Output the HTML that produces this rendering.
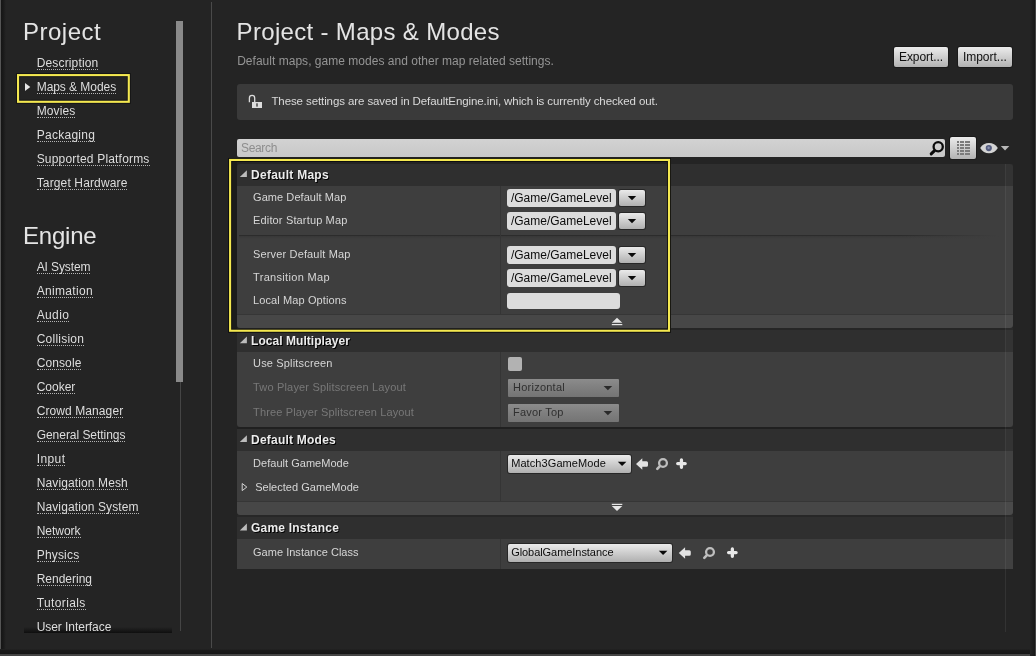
<!DOCTYPE html>
<html><head><meta charset="utf-8">
<style>
*{box-sizing:border-box;margin:0;padding:0}
html,body{width:1036px;height:656px;overflow:hidden;background:#242424}
body{position:relative;font-family:"Liberation Sans",sans-serif;color:#dcdcdc}
.a{position:absolute;white-space:nowrap}
.nav{color:#dedede;border-bottom:1px dotted #b4b4b4;height:15px}
.nav.nou{border-bottom:none}
.lbl{color:#d6d6d6}
.cat{font-weight:bold;color:#ececec;text-shadow:1px 1px 0 #000}
.hdr{background:#2f2f2f}
.rows{background:#3e3e3e}
.adv{background:#474747}
.btn{background:linear-gradient(#ececec,#d2d2d2 45%,#b2b2b2);border-radius:2px;box-shadow:0 0 0 1px #1a1a1a}
.tb{background:#dcdcdc;border-radius:3px}
.cmb{background:linear-gradient(#eaeaea,#d0d0d0 45%,#b0b0b0);border-radius:2px;box-shadow:0 0 0 1px #272727}
.cmbd{background:linear-gradient(#8c8c8c,#808080 45%,#747474);border-radius:1px}
svg{position:absolute;left:0;top:0;overflow:visible}
</style></head><body>
<!-- sidebar chrome -->
<div class="a" style="left:211px;top:2px;width:1px;height:646px;background:#4a4a4a"></div>
<div class="a" style="left:180px;top:382px;width:1px;height:249px;background:#454545"></div>
<div class="a" style="left:176px;top:21px;width:7px;height:361px;background:#8a8a8a"></div>
<!-- nav highlight -->
<!-- info box -->
<div class="a" style="left:237px;top:84px;width:776px;height:36px;background:#3a3a3a;border-radius:3px"></div>
<!-- buttons -->
<div class="a btn" style="left:894px;top:47px;width:54px;height:20px"></div>
<div class="a btn" style="left:958px;top:47px;width:54px;height:20px"></div>
<!-- search -->
<div class="a" style="left:237px;top:139px;width:708px;height:18px;background:linear-gradient(#d2d2d2,#c8c8c8);border-radius:2px"></div>
<div class="a btn" style="left:950px;top:137px;width:26px;height:22px"></div>
<!-- panel: Default Maps -->
<div class="a hdr" style="left:237px;top:164px;width:776px;height:22px;border-radius:3px 3px 0 0"></div>
<div class="a rows" style="left:237px;top:186px;width:776px;height:128px"></div>
<div class="a" style="left:239px;top:235px;width:760px;height:4px;background:linear-gradient(#2c2c2c 0,#2c2c2c 25%,#383838 26%,#3e3e3e)"></div>
<div class="a" style="left:899px;top:235px;width:100px;height:4px;background:linear-gradient(90deg,rgba(62,62,62,0),#3e3e3e)"></div>
<div class="a" style="left:237px;top:314px;width:776px;height:1px;background:#363636"></div>
<div class="a adv" style="left:237px;top:315px;width:776px;height:13px;border-radius:0 0 3px 3px"></div>
<div class="a" style="left:237px;top:328px;width:776px;height:2px;background:#262626"></div>
<!-- Local Multiplayer -->
<div class="a hdr" style="left:237px;top:330px;width:776px;height:22px"></div>
<div class="a rows" style="left:237px;top:352px;width:776px;height:75px;border-radius:0 0 3px 3px"></div>
<div class="a" style="left:237px;top:427px;width:776px;height:2px;background:#202020"></div>
<!-- Default Modes -->
<div class="a hdr" style="left:237px;top:429px;width:776px;height:22px"></div>
<div class="a rows" style="left:237px;top:451px;width:776px;height:50px"></div>
<div class="a" style="left:237px;top:501px;width:776px;height:1px;background:#363636"></div>
<div class="a adv" style="left:237px;top:502px;width:776px;height:13px;border-radius:0 0 3px 3px"></div>
<div class="a" style="left:237px;top:515px;width:776px;height:2px;background:#272727"></div>
<!-- Game Instance -->
<div class="a hdr" style="left:237px;top:517px;width:776px;height:22px"></div>
<div class="a rows" style="left:237px;top:539px;width:776px;height:30px"></div>
<!-- column divider -->
<div class="a" style="left:500px;top:186px;width:1px;height:128px;background:#353535"></div>
<div class="a" style="left:500px;top:352px;width:1px;height:75px;background:#353535"></div>
<div class="a" style="left:500px;top:451px;width:1px;height:50px;background:#353535"></div>
<div class="a" style="left:500px;top:539px;width:1px;height:30px;background:#353535"></div>
<!-- right scroll track -->
<div class="a" style="left:1005px;top:164px;width:1px;height:468px;background:rgba(255,255,255,0.07)"></div>
<div class="a" style="left:1006px;top:164px;width:7px;height:405px;background:rgba(255,255,255,0.018)"></div>
<!-- value widgets -->
<div class="a tb" style="left:507px;top:189px;width:109px;height:18px"></div>
<div class="a tb" style="left:507px;top:212px;width:109px;height:18px"></div>
<div class="a tb" style="left:507px;top:246px;width:109px;height:18px"></div>
<div class="a tb" style="left:507px;top:269px;width:109px;height:18px"></div>
<div class="a tb" style="left:507px;top:293px;width:113px;height:16px"></div>
<div class="a cmb" style="left:619px;top:190px;width:26px;height:16px"></div>
<div class="a cmb" style="left:619px;top:213px;width:26px;height:16px"></div>
<div class="a cmb" style="left:619px;top:247px;width:26px;height:16px"></div>
<div class="a cmb" style="left:619px;top:270px;width:26px;height:16px"></div>
<div class="a" style="left:508px;top:357px;width:14px;height:14px;background:#b2b2b2;border-radius:2px"></div>
<div class="a cmbd" style="left:508px;top:379px;width:111px;height:18px"></div>
<div class="a cmbd" style="left:508px;top:404px;width:111px;height:18px"></div>
<div class="a cmb" style="left:508px;top:455px;width:123px;height:18px"></div>
<div class="a cmb" style="left:508px;top:544px;width:164px;height:18px"></div>
<!-- yellow highlight box -->
<div class="a" style="left:232px;top:162px;width:5px;height:167px;background:#1c1c1c"></div>
<div class="a" style="left:24px;top:627px;width:148px;height:6px;background:linear-gradient(rgba(12,12,12,0),rgba(12,12,12,0.9))"></div>
<div id="tx" style="position:absolute;left:0;top:0;width:1036px;height:656px;will-change:transform">
<div class="a h1" style="left:22.90px;top:16.18px;font-size:24px;line-height:31px;letter-spacing:0.519px;color:#e4e4e4">Project</div>
<div class="a h1" style="left:22.90px;top:220.18px;font-size:24px;line-height:31px;letter-spacing:-0.183px;color:#e4e4e4">Engine</div>
<div class="a nav" style="left:36.70px;top:54.84px;font-size:12px;line-height:16px;letter-spacing:0.153px;">Description</div>
<div class="a nav" style="left:36.70px;top:78.84px;font-size:12px;line-height:16px;letter-spacing:-0.053px;">Maps &amp; Modes</div>
<div class="a nav" style="left:36.70px;top:102.84px;font-size:12px;line-height:16px;letter-spacing:0.109px;">Movies</div>
<div class="a nav" style="left:36.70px;top:126.84px;font-size:12px;line-height:16px;letter-spacing:0.277px;">Packaging</div>
<div class="a nav" style="left:36.70px;top:150.84px;font-size:12px;line-height:16px;letter-spacing:0.182px;">Supported Platforms</div>
<div class="a nav" style="left:36.70px;top:174.84px;font-size:12px;line-height:16px;letter-spacing:0.139px;">Target Hardware</div>
<div class="a nav" style="left:36.70px;top:258.84px;font-size:12px;line-height:16px;letter-spacing:-0.103px;">AI System</div>
<div class="a nav" style="left:36.70px;top:282.84px;font-size:12px;line-height:16px;letter-spacing:0.323px;">Animation</div>
<div class="a nav" style="left:36.70px;top:306.84px;font-size:12px;line-height:16px;letter-spacing:0.364px;">Audio</div>
<div class="a nav" style="left:36.70px;top:330.84px;font-size:12px;line-height:16px;letter-spacing:0.238px;">Collision</div>
<div class="a nav" style="left:36.70px;top:354.84px;font-size:12px;line-height:16px;letter-spacing:0.105px;">Console</div>
<div class="a nav" style="left:36.70px;top:378.84px;font-size:12px;line-height:16px;letter-spacing:-0.005px;">Cooker</div>
<div class="a nav" style="left:36.70px;top:402.84px;font-size:12px;line-height:16px;letter-spacing:0.090px;">Crowd Manager</div>
<div class="a nav" style="left:36.70px;top:426.84px;font-size:12px;line-height:16px;letter-spacing:-0.042px;">General Settings</div>
<div class="a nav" style="left:36.70px;top:450.84px;font-size:12px;line-height:16px;letter-spacing:0.414px;">Input</div>
<div class="a nav" style="left:36.70px;top:474.84px;font-size:12px;line-height:16px;letter-spacing:0.119px;">Navigation Mesh</div>
<div class="a nav" style="left:36.70px;top:498.84px;font-size:12px;line-height:16px;letter-spacing:0.113px;">Navigation System</div>
<div class="a nav" style="left:36.70px;top:522.84px;font-size:12px;line-height:16px;letter-spacing:-0.026px;">Network</div>
<div class="a nav" style="left:36.70px;top:546.84px;font-size:12px;line-height:16px;letter-spacing:0.186px;">Physics</div>
<div class="a nav" style="left:36.70px;top:570.84px;font-size:12px;line-height:16px;letter-spacing:-0.002px;">Rendering</div>
<div class="a nav" style="left:36.70px;top:594.84px;font-size:12px;line-height:16px;letter-spacing:0.385px;">Tutorials</div>
<div class="a nav nou" style="left:36.70px;top:618.84px;font-size:12px;line-height:16px;letter-spacing:-0.055px;">User Interface</div>
<div class="a h1" style="left:236.60px;top:16.18px;font-size:24px;line-height:31px;letter-spacing:0.325px;color:#e4e4e4">Project - Maps &amp; Modes</div>
<div class="a " style="left:237.20px;top:53.34px;font-size:12px;line-height:16px;letter-spacing:0.021px;color:#959595">Default maps, game modes and other map related settings.</div>
<div class="a " style="left:271.43px;top:93.52px;font-size:11.5px;line-height:15px;letter-spacing:-0.095px;color:#dadada">These settings are saved in DefaultEngine.ini, which is currently checked out.</div>
<div class="a " style="left:899.00px;top:48.84px;font-size:12px;line-height:16px;letter-spacing:-0.078px;color:#101010">Export...</div>
<div class="a " style="left:962.90px;top:48.84px;font-size:12px;line-height:16px;letter-spacing:-0.007px;color:#101010">Import...</div>
<div class="a " style="left:241.00px;top:139.84px;font-size:12px;line-height:16px;letter-spacing:-0.334px;color:#8e8e8e">Search</div>
<div class="a cat" style="left:251.00px;top:166.84px;font-size:12px;line-height:16px;letter-spacing:0.270px;">Default Maps</div>
<div class="a cat" style="left:251.00px;top:332.84px;font-size:12px;line-height:16px;letter-spacing:0.052px;">Local Multiplayer</div>
<div class="a cat" style="left:251.00px;top:431.84px;font-size:12px;line-height:16px;letter-spacing:0.229px;">Default Modes</div>
<div class="a cat" style="left:251.00px;top:519.84px;font-size:12px;line-height:16px;letter-spacing:0.207px;">Game Instance</div>
<div class="a lbl" style="left:253.05px;top:190.09px;font-size:11px;line-height:14px;letter-spacing:0.063px;">Game Default Map</div>
<div class="a lbl" style="left:253.05px;top:213.49px;font-size:11px;line-height:14px;letter-spacing:0.151px;">Editor Startup Map</div>
<div class="a lbl" style="left:253.05px;top:247.19px;font-size:11px;line-height:14px;letter-spacing:0.148px;">Server Default Map</div>
<div class="a lbl" style="left:253.05px;top:270.19px;font-size:11px;line-height:14px;letter-spacing:0.318px;">Transition Map</div>
<div class="a lbl" style="left:253.05px;top:293.19px;font-size:11px;line-height:14px;letter-spacing:0.110px;">Local Map Options</div>
<div class="a lbl" style="left:253.05px;top:356.19px;font-size:11px;line-height:14px;letter-spacing:0.167px;">Use Splitscreen</div>
<div class="a lbl" style="left:253.05px;top:380.39px;font-size:11px;line-height:14px;letter-spacing:0.172px;color:#787878">Two Player Splitscreen Layout</div>
<div class="a lbl" style="left:253.05px;top:405.19px;font-size:11px;line-height:14px;letter-spacing:0.145px;color:#787878">Three Player Splitscreen Layout</div>
<div class="a lbl" style="left:253.05px;top:456.19px;font-size:11px;line-height:14px;letter-spacing:0.026px;">Default GameMode</div>
<div class="a lbl" style="left:253.05px;top:544.99px;font-size:11px;line-height:14px;letter-spacing:0.018px;">Game Instance Class</div>
<div class="a lbl" style="left:255.15px;top:480.39px;font-size:11px;line-height:14px;letter-spacing:0.027px;">Selected GameMode</div>
<div class="a " style="left:510.90px;top:189.74px;font-size:12px;line-height:16px;letter-spacing:0.003px;color:#0c0c0c">/Game/GameLevel</div>
<div class="a " style="left:510.90px;top:212.74px;font-size:12px;line-height:16px;letter-spacing:0.003px;color:#0c0c0c">/Game/GameLevel</div>
<div class="a " style="left:510.90px;top:246.74px;font-size:12px;line-height:16px;letter-spacing:0.003px;color:#0c0c0c">/Game/GameLevel</div>
<div class="a " style="left:510.90px;top:269.74px;font-size:12px;line-height:16px;letter-spacing:0.003px;color:#0c0c0c">/Game/GameLevel</div>
<div class="a " style="left:513.05px;top:380.39px;font-size:11px;line-height:14px;letter-spacing:0.239px;color:#303030">Horizontal</div>
<div class="a " style="left:513.05px;top:405.19px;font-size:11px;line-height:14px;letter-spacing:0.195px;color:#303030">Favor Top</div>
<div class="a " style="left:511.15px;top:456.39px;font-size:11px;line-height:14px;letter-spacing:0.087px;color:#0c0c0c">Match3GameMode</div>
<div class="a " style="left:511.15px;top:545.19px;font-size:11px;line-height:14px;letter-spacing:-0.057px;color:#0c0c0c">GlobalGameInstance</div>
</div>
<!-- sidebar bottom clip + shadow -->
<!-- window frame -->
<div class="a" style="left:0;top:0;width:6px;height:656px;background:linear-gradient(90deg,#555 0,#555 1.2px,#161616 1.3px,#1b1b1b 3.500px,#242424 6px)"></div>
<div class="a" style="left:0;top:649px;width:1036px;height:7px;background:linear-gradient(#242424 0,#1a1a1a 1.500px,#161616 5.3px,#444 5.4px,#444 7px)"></div>
<div class="a" style="left:1030px;top:0;width:6px;height:656px;background:linear-gradient(90deg,#242424 0,#191919 4.8px,#444 4.9px,#444 6px)"></div>
<!-- icons -->
<svg width="1036" height="656" viewBox="0 0 1036 656">
<rect x="18.050" y="75.100" width="110.750" height="26.700" fill="none" stroke="#141414" stroke-width="4"/>
<rect x="18.050" y="75.100" width="110.750" height="26.700" fill="none" stroke="#f4e850" stroke-width="2.100"/>
<rect x="230.100" y="159.950" width="438.900" height="170.800" fill="none" stroke="#0e0e0e" stroke-width="4"/>
<rect x="230.100" y="159.950" width="438.900" height="170.800" fill="none" stroke="#f4e850" stroke-width="2.100"/>
<!-- nav arrow -->
<path d="M25 83 L30.3 87 L25 91 Z" fill="#e4e4e4"/>
<!-- lock -->
<path d="M249.4 102.2 V98 a2.65 2.65 0 0 1 5.3 0 V102" fill="none" stroke="#dcdcdc" stroke-width="1.3"/>
<rect x="252" y="102" width="10" height="6" fill="#dcdcdc"/>
<rect x="256.2" y="103.3" width="1.6" height="3.3" fill="#505050"/>
<!-- search magnifier -->
<circle cx="938.2" cy="146.7" r="4.600" fill="none" stroke="#0a0a0a" stroke-width="2.300"/>
<path d="M934.300 150.900 L931.200 153.900" stroke="#0a0a0a" stroke-width="3" stroke-linecap="round"/>
<!-- grid icon -->
<g fill="#7c7c7c">
<rect x="957" y="141" width="2" height="2"/><rect x="960" y="141" width="4" height="2"/><rect x="965" y="141" width="5" height="2"/>
<rect x="957" y="144" width="2" height="2"/><rect x="960" y="144" width="4" height="2"/><rect x="965" y="144" width="5" height="2"/>
<rect x="957" y="147" width="2" height="2"/><rect x="960" y="147" width="4" height="2"/><rect x="965" y="147" width="5" height="2"/>
<rect x="957" y="150" width="2" height="2"/><rect x="960" y="150" width="4" height="2"/><rect x="965" y="150" width="5" height="2"/>
<rect x="957" y="153" width="2" height="2"/><rect x="960" y="153" width="4" height="2"/><rect x="965" y="153" width="5" height="2"/>
</g>
<!-- eye -->
<path d="M980.200 148 C982 144.500 985.500 142.900 989 142.900 C992.500 142.900 996 144.500 997.800 148 C996 151.500 992.500 153.200 989 153.200 C985.500 153.200 982 151.500 980.200 148 Z" fill="#d4d4d4"/>
<circle cx="988.8" cy="148.1" r="3.100" fill="#535b7e"/>
<circle cx="988.600" cy="147.800" r="1.200" fill="#8c93b2"/>
<path d="M1000.8 146 H1009.3 L1005.05 150.4 Z" fill="#b8b8b8"/>
<!-- combo arrows -->
<g fill="#0a0a0a">
<path d="M627.8 196 H636.2 L632 200.2 Z"/>
<path d="M627.8 219 H636.2 L632 223.2 Z"/>
<path d="M627.8 253 H636.2 L632 257.2 Z"/>
<path d="M627.8 276 H636.2 L632 280.2 Z"/>
<path d="M617.8 461.7 H626.4 L622.1 466 Z"/>
<path d="M658.8 550.7 H667.4 L663.1 555 Z"/>
</g>
<g fill="#2a2a2a">
<path d="M603.6 385.9 H612.2 L607.9 390.2 Z"/>
<path d="M603.6 410.9 H612.2 L607.9 415.2 Z"/>
</g>
<!-- eject / expand icons -->
<g fill="#e6e6e6">
<path d="M617 317.8 L622.3 322.8 H611.8 Z"/><rect x="611.8" y="324" width="10.5" height="1.2"/>
<rect x="611.8" y="503.8" width="10.5" height="1.2"/><path d="M611.8 506 H622.3 L617 511 Z"/>
</g>
<!-- category triangles -->
<g fill="#bcbcbc">
<path d="M239.8 177 H246.9 V170.2 Z"/>
<path d="M239.8 343.2 H246.9 V336.4 Z"/>
<path d="M239.8 442 H246.9 V435.2 Z"/>
<path d="M239.8 530.400 H246.9 V523.6 Z"/>
</g>
<path d="M242.2 483.500 V490.6 L246.8 487.050 Z" fill="none" stroke="#d4d4d4" stroke-width="1"/>
<!-- row action icons -->
<g id="ic1">
<path d="M636 464 L642.300 458.200 V461.300 H646.500 a1.500 1.500 0 0 1 1.500 1.500 V465.200 a1.500 1.500 0 0 1 -1.500 1.500 H642.300 V469.800 Z" fill="#e2e2e2"/>
<circle cx="663" cy="463" r="3.900" fill="none" stroke="#bebebe" stroke-width="2.300"/>
<path d="M659.700 466.300 L657.300 468.800" stroke="#bebebe" stroke-width="2.600" stroke-linecap="round"/>
<path d="M681.450 459.900 V467.300 M677.700 463.600 H685.200" stroke="#e8e8e8" stroke-width="3.300" stroke-linecap="round"/>
</g>
<g transform="translate(42.800,89)">
<path d="M636 464 L642.300 458.200 V461.300 H646.500 a1.500 1.500 0 0 1 1.500 1.500 V465.200 a1.500 1.500 0 0 1 -1.500 1.500 H642.300 V469.800 Z" fill="#e2e2e2"/>
<circle cx="667.200" cy="463" r="3.900" fill="none" stroke="#bebebe" stroke-width="2.300"/>
<path d="M663.900 466.300 L661.500 468.800" stroke="#bebebe" stroke-width="2.600" stroke-linecap="round"/>
<path d="M689.550 459.900 V467.300 M685.800 463.600 H693.300" stroke="#e8e8e8" stroke-width="3.300" stroke-linecap="round"/>
</g>
</svg>
</body></html>
